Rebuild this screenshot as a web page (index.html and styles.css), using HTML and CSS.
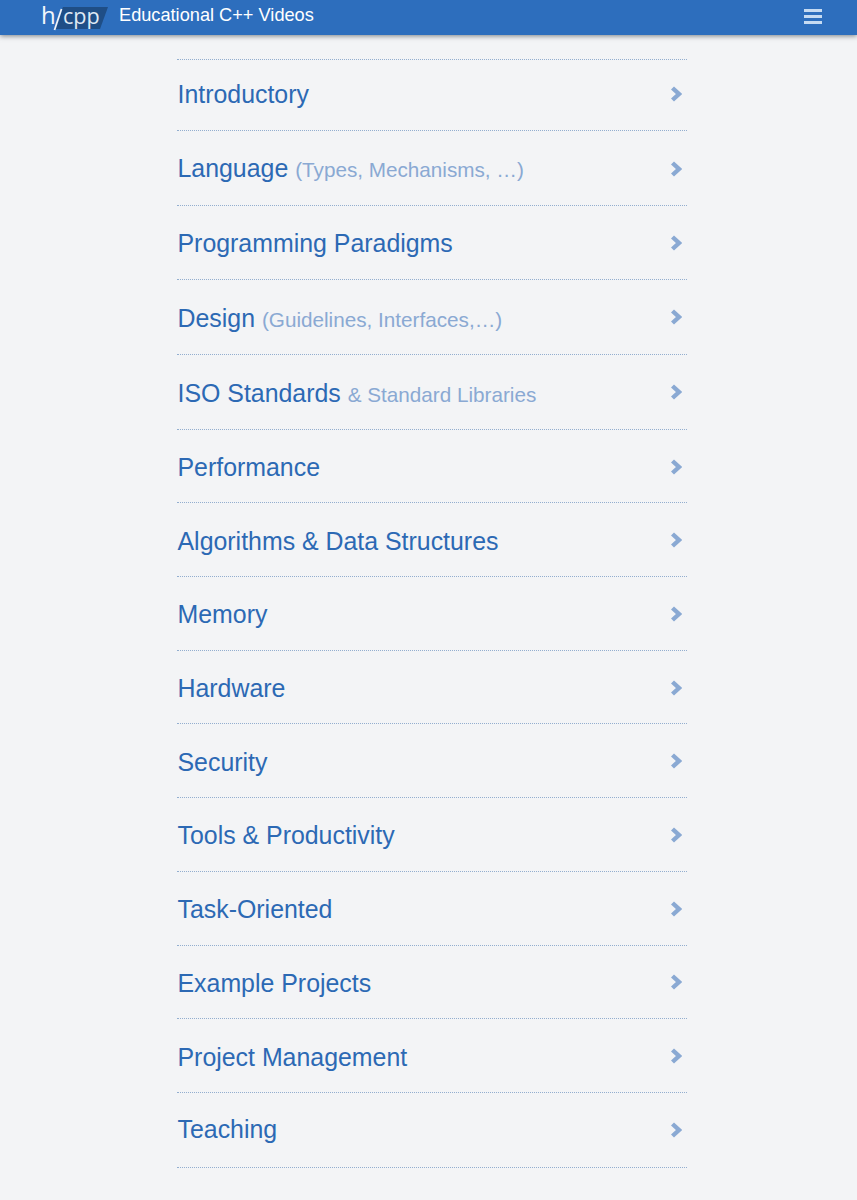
FILE: index.html
```html
<!DOCTYPE html>
<html lang="en">
<head>
<meta charset="utf-8">
<title>Educational C++ Videos</title>
<link rel="stylesheet" href="styles.css">
</head>
<body>
<header class="topbar">
  <a class="logo" href="#"><svg class="logo-mark" viewBox="0 0 68 35" width="68" height="35" aria-hidden="true"><polygon points="22,7 67,7 59,29 13,29" fill="#1f4e86"/><path d="M20.5 9 L13.5 30" stroke="#f0f4fa" stroke-width="1.8" fill="none"/></svg><span class="logo-h">h</span><span class="logo-cpp">cpp</span></a>
  <span class="site-title">Educational C++ Videos</span>
  <button class="menu" aria-label="Menu"><span></span><span></span><span></span></button>
</header>
<main class="list">
  <a class="row first" href="#"><span class="label">Introductory</span><svg class="chev" viewBox="0 0 12 16"><path d="M2.5 2 L9 8 L2.5 14" /></svg></a>
  <a class="row tall lang" href="#"><span class="label">Language <small>(Types, Mechanisms, …)</small></span><svg class="chev" viewBox="0 0 12 16"><path d="M2.5 2 L9 8 L2.5 14" /></svg></a>
  <a class="row" href="#"><span class="label">Programming Paradigms</span><svg class="chev" viewBox="0 0 12 16"><path d="M2.5 2 L9 8 L2.5 14" /></svg></a>
  <a class="row tall" href="#"><span class="label">Design <small>(Guidelines, Interfaces,…)</small></span><svg class="chev" viewBox="0 0 12 16"><path d="M2.5 2 L9 8 L2.5 14" /></svg></a>
  <a class="row tall" href="#"><span class="label">ISO Standards <small>&amp; Standard Libraries</small></span><svg class="chev" viewBox="0 0 12 16"><path d="M2.5 2 L9 8 L2.5 14" /></svg></a>
  <a class="row" href="#"><span class="label">Performance</span><svg class="chev" viewBox="0 0 12 16"><path d="M2.5 2 L9 8 L2.5 14" /></svg></a>
  <a class="row" href="#"><span class="label">Algorithms &amp; Data Structures</span><svg class="chev" viewBox="0 0 12 16"><path d="M2.5 2 L9 8 L2.5 14" /></svg></a>
  <a class="row" href="#"><span class="label">Memory</span><svg class="chev" viewBox="0 0 12 16"><path d="M2.5 2 L9 8 L2.5 14" /></svg></a>
  <a class="row" href="#"><span class="label">Hardware</span><svg class="chev" viewBox="0 0 12 16"><path d="M2.5 2 L9 8 L2.5 14" /></svg></a>
  <a class="row" href="#"><span class="label">Security</span><svg class="chev" viewBox="0 0 12 16"><path d="M2.5 2 L9 8 L2.5 14" /></svg></a>
  <a class="row" href="#"><span class="label">Tools &amp; Productivity</span><svg class="chev" viewBox="0 0 12 16"><path d="M2.5 2 L9 8 L2.5 14" /></svg></a>
  <a class="row" href="#"><span class="label">Task-Oriented</span><svg class="chev" viewBox="0 0 12 16"><path d="M2.5 2 L9 8 L2.5 14" /></svg></a>
  <a class="row" href="#"><span class="label">Example Projects</span><svg class="chev" viewBox="0 0 12 16"><path d="M2.5 2 L9 8 L2.5 14" /></svg></a>
  <a class="row" href="#"><span class="label">Project Management</span><svg class="chev" viewBox="0 0 12 16"><path d="M2.5 2 L9 8 L2.5 14" /></svg></a>
  <a class="row last" href="#"><span class="label">Teaching</span><svg class="chev" viewBox="0 0 12 16"><path d="M2.5 2 L9 8 L2.5 14" /></svg></a>
</main>
</body>
</html>
```

FILE: styles.css
```css
* { box-sizing: border-box; }
html, body { margin: 0; padding: 0; }
body {
  background: #f3f4f6;
  font-family: "Liberation Sans", Arial, sans-serif;
  height: 1200px;
  overflow: hidden;
}
.topbar {
  height: 35px;
  background: #2d6ebd;
  box-shadow: 0 1px 5px rgba(40, 50, 60, 0.6);
  display: flex;
  align-items: center;
  padding: 0 35px 0 41px;
  color: #fff;
}
.logo {
  display: block;
  position: relative;
  width: 67px;
  height: 35px;
  color: #f2f6fb;
  text-decoration: none;
  font-family: "Open Sans", sans-serif;
}
.logo-mark { position: absolute; left: 0; top: 0; }
.logo-h { position: absolute; left: 0; top: 0; font-size: 24px; font-weight: 500; line-height: 30px; }
.logo-cpp { position: absolute; left: 22px; top: 0; font-size: 21.6px; line-height: 32px; color: #dfe9f5; }
.site-title { margin-left: 11px; font-size: 18.2px; margin-top: -5px; flex: 1; }
.menu {
  width: 18px;
  padding: 0;
  margin-top: -2px;
  border: 0;
  background: none;
  display: flex;
  flex-direction: column;
  gap: 3px;
}
.menu span { display: block; height: 3px; background: #c6dbf2; }
.list {
  width: 510px;
  margin: 24px 0 0 177px;
  border-top: 1px dotted #93aecf;
}
.row {
  display: flex;
  align-items: center;
  justify-content: space-between;
  height: 73.7px;
  padding: 1px 5px 0 0.5px;
  border-bottom: 1px dotted #93aecf;
  color: #2c69b4;
  text-decoration: none;
}
.row.first { height: 71px; padding-top: 0; padding-bottom: 2px; }
.row.tall { height: 75px; }
.row.last { height: 75.6px; padding-top: 0; padding-bottom: 1px; }
.label { font-size: 24.9px; white-space: nowrap; padding-top: 2px; }
.row.first .label, .row.lang .label, .row.last .label { padding-top: 0; }
.label small { font-size: 20.7px; color: #8aa9d3; margin-left: 0; }
.chev { width: 12px; height: 16px; fill: none; stroke: #8aa9d3; stroke-width: 4.4; }
```
